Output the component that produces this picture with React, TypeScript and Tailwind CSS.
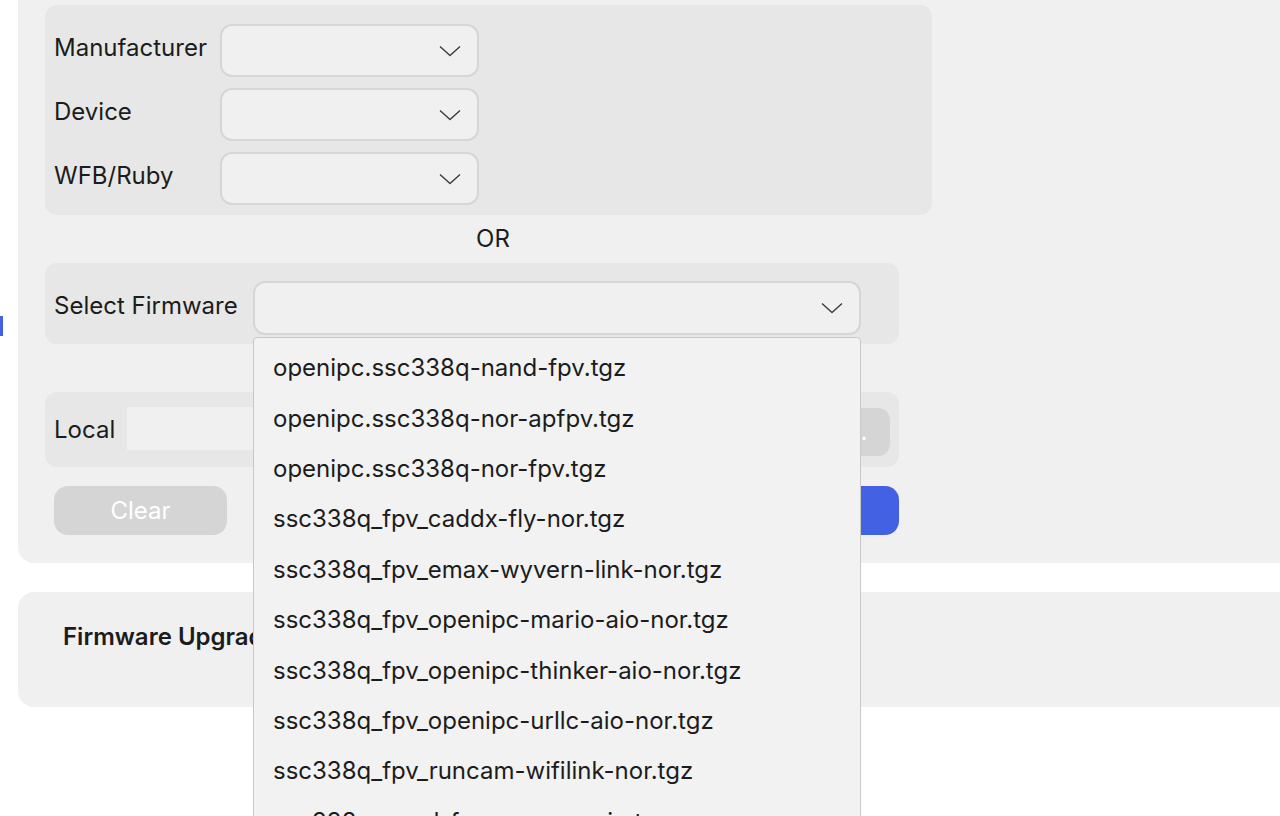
const firmwares = [
  'openipc.ssc338q-nand-fpv.tgz',
  'openipc.ssc338q-nor-apfpv.tgz',
  'openipc.ssc338q-nor-fpv.tgz',
  'ssc338q_fpv_caddx-fly-nor.tgz',
  'ssc338q_fpv_emax-wyvern-link-nor.tgz',
  'ssc338q_fpv_openipc-mario-aio-nor.tgz',
  'ssc338q_fpv_openipc-thinker-aio-nor.tgz',
  'ssc338q_fpv_openipc-urllc-aio-nor.tgz',
  'ssc338q_fpv_runcam-wifilink-nor.tgz',
  'ssc338q_nand_fpv_runcam-aio.tgz',
]

function Chevron() {
  return (
    <svg width="22" height="12" viewBox="0 0 22 12" fill="none" className="shrink-0">
      <path d="M1 1.5 L11 10.5 L21 1.5" stroke="#3a3a3a" strokeWidth="1.4" strokeLinejoin="round" />
    </svg>
  )
}

function Select({ className }: { className: string }) {
  return (
    <div className={`flex items-center justify-end pr-[16px] bg-[#f0f0f0] border-2 border-[#d6d6d6] rounded-[12px] ${className}`}>
      <Chevron />
    </div>
  )
}

export default function App() {
  return (
    <div className="relative min-h-[816px] bg-white overflow-hidden text-[#1c1c1c] font-['Inter','Noto_Sans',sans-serif] text-[24px]">
      {/* blue tab at left edge */}
      <div className="absolute left-0 top-[316px] w-[3px] h-[20px] bg-[#4262e3]" />

      <div className="ml-[18px] mt-[-20px] pt-[25px] pb-[28px] pl-[27px] bg-[#f0f0f0] rounded-bl-[16px]">
        {/* device selectors */}
        <div className="w-[887px] bg-[#e7e7e7] rounded-[12px] pl-[9px] pt-[19px] pb-[10px] flex flex-col gap-[11px]">
          {['Manufacturer', 'Device', 'WFB/Ruby'].map((label) => (
            <div key={label} className="flex items-center">
              <span className="w-[166px] -mt-[6px]">{label}</span>
              <Select className="w-[259px] h-[53px]" />
            </div>
          ))}
        </div>

        <div className="w-[896px] text-center h-[48px] leading-[48px]">OR</div>

        {/* firmware select */}
        <div className="relative w-[854px] bg-[#e7e7e7] rounded-[12px] pl-[9px] pt-[18px] pb-[9px] flex items-center">
          <span className="w-[199px] -mt-[4px]">Select Firmware</span>
          <Select className="w-[608px] h-[54px]" />

          {/* open dropdown list */}
          <div className="absolute z-10 left-[208px] top-[74px] w-[608px] h-[500px] bg-[#f2f2f2] border border-[#c8c8c8] rounded-t-[4px] pt-[5px] pl-[19px]">
            {firmwares.map((f) => (
              <div key={f} className="h-[50.4px] flex items-center whitespace-nowrap">
                {f}
              </div>
            ))}
          </div>
        </div>

        {/* local file */}
        <div className="mt-[48px] w-[854px] h-[75px] bg-[#e7e7e7] rounded-[12px] pl-[9px] pr-[9px] flex items-center">
          <span className="w-[73px]">Local</span>
          <div className="flex-1 h-[43px] bg-[#f0f0f0] -mt-[2px]" />
          <button className="ml-[12px] w-[66px] h-[48px] rounded-[12px] bg-[#d5d5d5] text-white mt-[4px]">...</button>
        </div>

        {/* buttons */}
        <div className="mt-[19px] w-[854px] flex justify-between pl-[9px]">
          <button className="w-[173px] h-[49px] rounded-[14px] bg-[#d5d5d5] text-white">Clear</button>
          <button className="w-[173px] h-[49px] rounded-[14px] bg-[#4262e3] text-white">Flash</button>
        </div>
      </div>

      <div className="ml-[18px] mt-[29px] h-[115px] bg-[#f0f0f0] rounded-l-[16px] pl-[45px] pt-[27px]">
        <span className="font-semibold text-[24px]">Firmware Upgrade</span>
      </div>
    </div>
  )
}
